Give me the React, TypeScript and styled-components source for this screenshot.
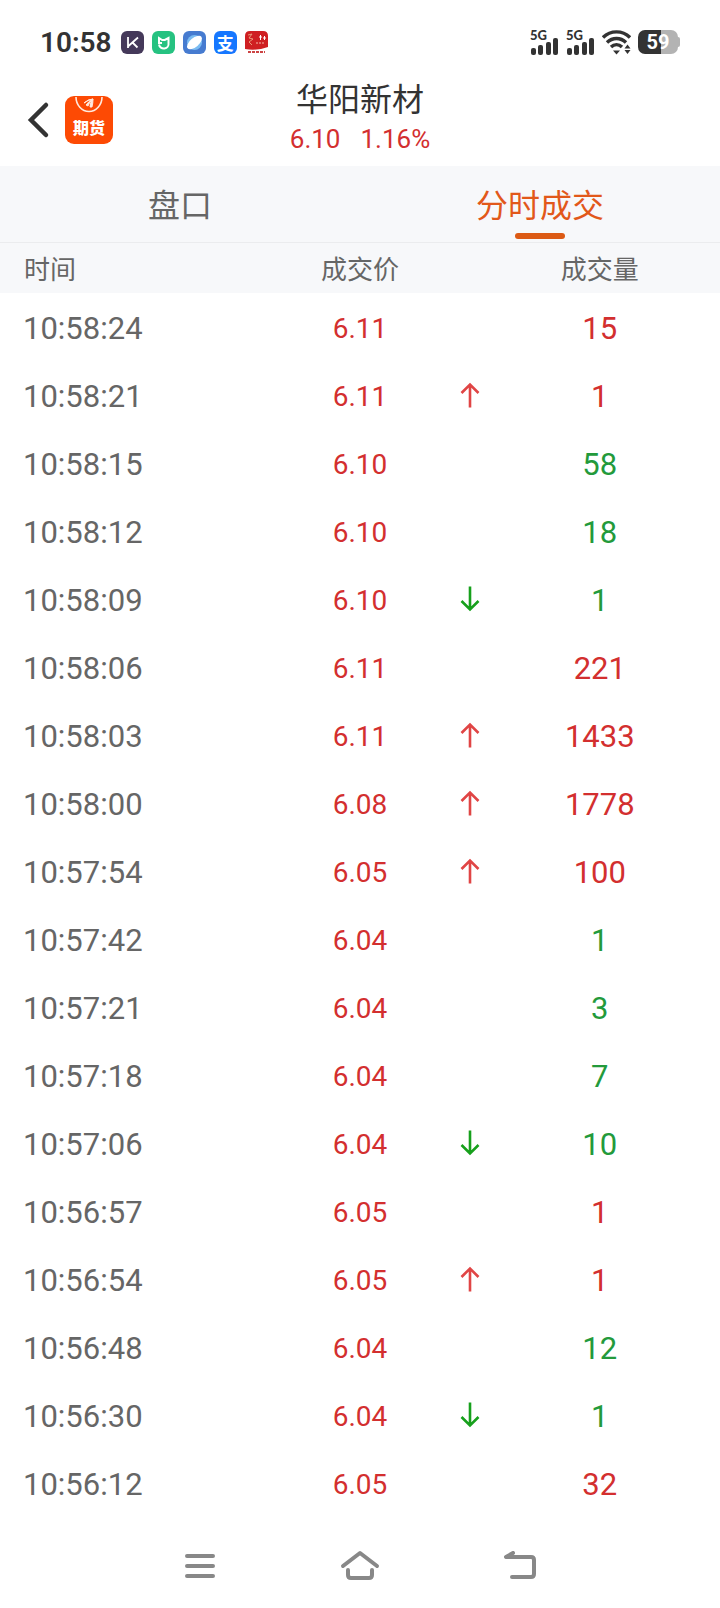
import React from 'react';
import styled, { createGlobalStyle } from 'styled-components';

const GlobalStyle = createGlobalStyle`
  * { box-sizing: border-box; }
  body {
    margin: 0;
    background: #fff;
    color: #666;
    font-family: Roboto, "Noto Sans CJK SC", sans-serif;
  }
  button { font: inherit; border: 0; background: none; padding: 0; cursor: pointer; }
  svg { display: block; }
`;

const RED = '#d32f2f';
const GREEN = '#239a3b';

const Page = styled.div`
  min-height: 100vh;
  display: flex;
  flex-direction: column;
`;

const StatusBar = styled.div`
  height: 72px;
  padding: 12px 40px 0;
  display: flex;
  align-items: center;
  justify-content: space-between;
  color: #333;
`;

const StatusGroup = styled.div<{ $gap: number }>`
  display: flex;
  align-items: center;
  gap: ${(p) => p.$gap}px;
`;

const Clock = styled.span`
  padding-top: 2px;
  margin-right: 1px;
  font-size: 28px;
  line-height: 32px;
  font-weight: 600;
`;

const AppBadge = styled.span<{ $bg: string }>`
  width: 23px;
  height: 23px;
  border-radius: 6px;
  background: ${(p) => p.$bg};
  color: #fff;
  font-family: "Noto Sans CJK SC", sans-serif;
  font-size: 17px;
  line-height: 23px;
  font-weight: 700;
  text-align: center;
`;

const Battery = styled.span`
  display: flex;
  align-items: center;
`;

const BatteryBody = styled.span`
  width: 40px;
  height: 24px;
  border-radius: 7px;
  background: linear-gradient(90deg, #333 0 57%, #b3b3b3 57%);
  color: #fff;
  font-size: 20px;
  line-height: 25px;
  font-weight: 700;
  text-align: center;
`;

const BatteryTip = styled.span`
  width: 2px;
  height: 10px;
  border-radius: 0 2px 2px 0;
  background: #b3b3b3;
`;

const Header = styled.header`
  height: 94px;
  padding: 0 24px;
  display: grid;
  grid-template-columns: 1fr auto 1fr;
  align-items: center;
`;

const HeaderLeft = styled.div`
  display: flex;
  align-items: center;
  gap: 13px;
  padding-top: 2px;
`;

const BrandButton = styled.button`
  width: 48px;
  height: 48px;
  border-radius: 9px;
  background: #fd4a04;
  color: #fff;
  display: flex;
  flex-direction: column;
  align-items: center;
  font-family: "Noto Sans CJK SC", sans-serif;
  font-size: 16px;
  line-height: 26px;
  font-weight: 900;
`;

const TitleBlock = styled.div`
  display: flex;
  flex-direction: column;
  gap: 4px;
  text-align: center;
  padding-bottom: 4px;
`;

const Title = styled.h1`
  margin: 0;
  color: #333;
  font-family: "Noto Sans CJK SC", sans-serif;
  font-size: 32px;
  line-height: 40px;
  font-weight: 400;
`;

const Quote = styled.p`
  margin: 0;
  display: flex;
  justify-content: center;
  gap: 20px;
  color: ${RED};
  font-size: 26px;
  line-height: 36px;
`;

const Tabs = styled.nav`
  display: grid;
  grid-template-columns: 1fr 1fr;
  height: 77px;
  background: #f7f8fa;
  border-bottom: 1px solid #ebecee;
`;

const Tab = styled.button<{ $active?: boolean }>`
  display: flex;
  flex-direction: column;
  align-items: center;
  justify-content: flex-end;
  gap: 10px;
  padding-bottom: 3px;
  color: ${(p) => (p.$active ? '#e2581a' : '#666')};
  font-family: "Noto Sans CJK SC", sans-serif;
  font-size: 32px;
  line-height: 40px;

  &::after {
    content: '';
    width: 50px;
    height: 6px;
    border-radius: 3px;
    background: ${(p) => (p.$active ? '#dc5a14' : 'transparent')};
  }
`;

const Trades = styled.table`
  width: 100%;
  table-layout: fixed;
  border-collapse: collapse;
`;

const HeadRow = styled.tr`
  height: 50px;
  background: #f7f8fa;
`;

const HeadCell = styled.th<{ $width: string; $align?: string }>`
  width: ${(p) => p.$width};
  padding: 0;
  font-family: "Noto Sans CJK SC", sans-serif;
  font-size: 26px;
  line-height: 36px;
  font-weight: 400;
  text-align: ${(p) => p.$align ?? 'center'};
  &:first-child { padding-left: 24px; }
  &:last-child { padding-right: 10px; }
`;

const Row = styled.tr`
  height: 68px;
`;

const Cell = styled.td<{ $color?: string; $size?: number; $align?: string }>`
  padding: 4px 0 0;
  color: ${(p) => p.$color ?? '#666'};
  font-size: ${(p) => p.$size ?? 31}px;
  line-height: 40px;
  text-align: ${(p) => p.$align ?? 'center'};
  &:first-child { padding-left: 23px; }
  &:last-child { padding-right: 10px; }
`;

const ArrowCell = styled.td`
  padding: 0;
  svg { margin: 0 auto; }
`;

const SystemNav = styled.nav`
  height: 90px;
  padding: 7px 120px 0;
  display: grid;
  grid-template-columns: repeat(3, 1fr);
  justify-items: center;
  align-items: center;
`;

type Direction = 'up' | 'down';

const trades: [string, string, string, 'r' | 'g', Direction?][] = [
  ['10:58:24', '6.11', '15', 'r'],
  ['10:58:21', '6.11', '1', 'r', 'up'],
  ['10:58:15', '6.10', '58', 'g'],
  ['10:58:12', '6.10', '18', 'g'],
  ['10:58:09', '6.10', '1', 'g', 'down'],
  ['10:58:06', '6.11', '221', 'r'],
  ['10:58:03', '6.11', '1433', 'r', 'up'],
  ['10:58:00', '6.08', '1778', 'r', 'up'],
  ['10:57:54', '6.05', '100', 'r', 'up'],
  ['10:57:42', '6.04', '1', 'g'],
  ['10:57:21', '6.04', '3', 'g'],
  ['10:57:18', '6.04', '7', 'g'],
  ['10:57:06', '6.04', '10', 'g', 'down'],
  ['10:56:57', '6.05', '1', 'r'],
  ['10:56:54', '6.05', '1', 'r', 'up'],
  ['10:56:48', '6.04', '12', 'g'],
  ['10:56:30', '6.04', '1', 'g', 'down'],
  ['10:56:12', '6.05', '32', 'r'],
];

const Arrow = ({ dir }: { dir: Direction }) => (
  <svg width="20" height="26" viewBox="0 0 20 26" fill="none" strokeWidth="2.6" stroke={dir === 'up' ? '#e04545' : '#17a01c'}>
    <path d={dir === 'up' ? 'M10 25.500V2.500M1.500 11L10 2.500l8.500 8.500' : 'M10 .5v23M1.500 15L10 23.500l8.500-8.500'} />
  </svg>
);

const SignalBox = styled.span`
  width: 29px;
  height: 26px;
  display: flex;
  flex-direction: column;
  font-family: Lato, sans-serif;
  font-size: 13px;
  line-height: 12px;
  font-weight: 900;
  svg { margin-top: -4px; }
`;

const Signal = () => (
  <SignalBox>
    5G
    <svg width="29" height="18" viewBox="0 0 29 18" fill="#333">
      <rect x="1" y="11" width="5" height="7" rx="2" />
      <rect x="8" y="8" width="5" height="10" rx="2" />
      <rect x="16" y="5" width="5" height="13" rx="2" />
      <rect x="23" y="1" width="5" height="17" rx="2" />
    </svg>
  </SignalBox>
);

const Wifi = () => (
  <svg width="29" height="26" viewBox="0 0 29 26" fill="none" stroke="#333" strokeWidth="3.400">
    <path d="M1 8.500C8.500 1 20.500 1 28 8.500M5 13.500c5.500-5.300 13.500-5.300 19 0M9 18c3.200-3 7.800-3 11 0" />
    <path d="M11 21.500h7L14.500 25.500zM25.500 15.500l3 4h-6zM25.500 25l3-4h-6z" fill="#333" stroke="none" />
  </svg>
);

export default function App() {
  return (
    <Page>
      <GlobalStyle />
      <StatusBar>
        <StatusGroup $gap={8}>
          <Clock>10:58</Clock>
          <AppBadge $bg="#45395a">
            <svg width="23" height="23" viewBox="0 0 23 23" fill="none" stroke="#fff" strokeWidth="1.800">
              <path d="M7 6v11M17 6.500L7.500 15M11.500 11.500l5 5" />
            </svg>
          </AppBadge>
          <AppBadge $bg="#26c281">
            <svg width="23" height="23" viewBox="0 0 23 23" fill="none" stroke="#fff" strokeWidth="2">
              <path d="M10 12H7V7l3.200 2h2.600L16.500 7v5a4.800 4.800 0 0 1-9.500 1.500" />
            </svg>
          </AppBadge>
          <AppBadge $bg="#467bd0">
            <svg width="23" height="23" viewBox="0 0 23 23">
              <circle cx="11.500" cy="11.500" r="7.500" fill="#7bbcf2" />
              <ellipse cx="11.500" cy="11.500" rx="9" ry="4.500" transform="rotate(-40 11.500 11.500)" fill="#fff" />
            </svg>
          </AppBadge>
          <AppBadge $bg="#1677ff">支</AppBadge>
          <AppBadge $bg="#fff">
            <svg width="23" height="23" viewBox="0 0 23 23">
              <path d="M5 0h13q5 0 5 5v11q-11.500 4-23 2V5q0-5 5-5z" fill="#cf1f22" />
              <path d="M3 4l4-1-3 4 4 1-4 3 3 3" stroke="#e89a7a" fill="none" />
              <path d="M14 6h3M15.500 4v5M18 7h3M19.500 5v4" stroke="#fff" fill="none" />
              <path d="M11 12h8" stroke="#f3b9a8" strokeDasharray="2 1" />
              <path d="M3 21h17" stroke="#c44" strokeWidth="2" strokeDasharray="3 1" />
            </svg>
          </AppBadge>
        </StatusGroup>
        <StatusGroup $gap={7}>
          <Signal />
          <Signal />
          <Wifi />
          <Battery>
            <BatteryBody>59</BatteryBody>
            <BatteryTip />
          </Battery>
        </StatusGroup>
      </StatusBar>

      <Header>
        <HeaderLeft>
          <button aria-label="返回">
            <svg width="28" height="38" viewBox="0 0 28 38" fill="none" stroke="#333" strokeWidth="4.500" strokeLinecap="round">
              <path d="M22 4L7 19l15 15" />
            </svg>
          </button>
          <BrandButton>
            <svg width="48" height="18" viewBox="0 0 48 18" fill="none" stroke="#ffe9dd" strokeWidth="1.600">
              <path d="M11 1a13 14.500 0 0 0 26 0" />
              <path d="M19 7q4-4 9-4-5 1-9 4zM21 9q3-4 7-6-4 3-5 7zM25 11q0-5 3-8 0 4-1 8z" fill="#ffe9dd" strokeWidth="1" />
            </svg>
            期货
          </BrandButton>
        </HeaderLeft>
        <TitleBlock>
          <Title>华阳新材</Title>
          <Quote><span>6.10</span><span>1.16%</span></Quote>
        </TitleBlock>
      </Header>

      <Tabs>
        <Tab>盘口</Tab>
        <Tab $active>分时成交</Tab>
      </Tabs>

      <Trades>
        <thead>
          <HeadRow>
            <HeadCell $width="37.5%" $align="left">时间</HeadCell>
            <HeadCell $width="25%">成交价</HeadCell>
            <HeadCell $width="5.5%" />
            <HeadCell $width="32%">成交量</HeadCell>
          </HeadRow>
        </thead>
        <tbody>
          {trades.map(([time, price, volume, tone, dir]) => (
            <Row key={time}>
              <Cell $align="left">{time}</Cell>
              <Cell $color={RED} $size={28}>{price}</Cell>
              <ArrowCell>{dir && <Arrow dir={dir} />}</ArrowCell>
              <Cell $color={tone === 'r' ? RED : GREEN}>{volume}</Cell>
            </Row>
          ))}
        </tbody>
      </Trades>

      <SystemNav>
        <button aria-label="菜单">
          <svg width="32" height="30" viewBox="0 0 32 30" stroke="#888" strokeWidth="4" strokeLinecap="round">
            <path d="M3 5h26M3 15h26M3 25h26" />
          </svg>
        </button>
        <button aria-label="主页">
          <svg width="40" height="34" viewBox="0 0 40 34" fill="none" stroke="#888" strokeWidth="4" strokeLinecap="round" strokeLinejoin="round">
            <path d="M3 17L20 4l17 13M8 21v5q0 3 3 3h18q3 0 3-3v-5" />
          </svg>
        </button>
        <button aria-label="后退">
          <svg width="34" height="30" viewBox="0 0 34 30" fill="none" stroke="#888" strokeWidth="4" strokeLinecap="round" strokeLinejoin="round">
            <path d="M10 2L3 6h25q3 0 3 3v14q0 3-3 3H9" />
          </svg>
        </button>
      </SystemNav>
    </Page>
  );
}
